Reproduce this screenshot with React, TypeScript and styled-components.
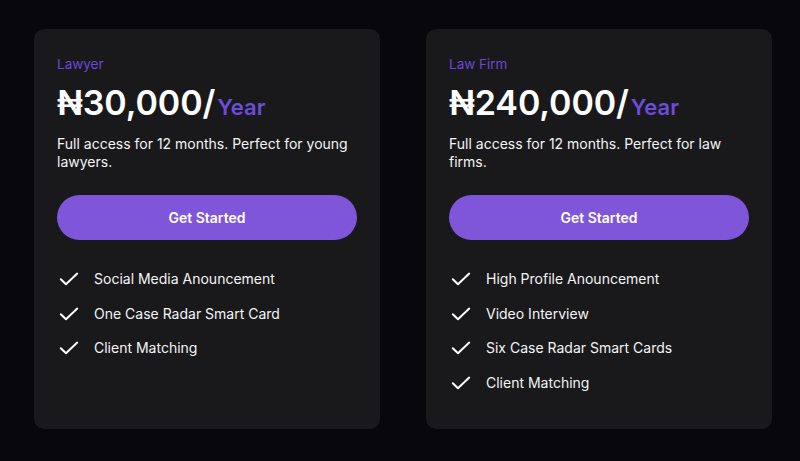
import React from "react";
import styled, { createGlobalStyle } from "styled-components";

const GlobalStyle = createGlobalStyle`
  html, body {
    margin: 0;
    padding: 0;
    background: #07070c;
  }
  body {
    font-family: Inter, "Noto Sans", sans-serif;
    -webkit-font-smoothing: antialiased;
  }
`;

const Page = styled.div`
  width: 800px;
  height: 461px;
  box-sizing: border-box;
  padding: 29px 0 0 34px;
  display: flex;
  gap: 46px;
  align-items: flex-start;
  background: #07070c;
`;

const Card = styled.div`
  width: 346px;
  height: 400px;
  box-sizing: border-box;
  background: #19191c;
  border-radius: 10px;
  padding: 26px 23px 0 23px;
  display: flex;
  flex-direction: column;
`;

const Label = styled.div`
  font-size: 13.5px;
  line-height: 18px;
  color: #6a47d6;
  font-weight: 400;
`;

const Price = styled.div`
  margin-top: 10px;
  font-size: 34px;
  line-height: 40px;
  font-weight: 600;
  color: #ffffff;
  letter-spacing: -0.1px;
  white-space: nowrap;
`;

const Period = styled.span`
  margin-left: 2px;
  font-size: 22px;
  font-weight: 600;
  color: #6d4cd9;
  letter-spacing: 0;
`;

const Description = styled.p`
  margin: 8px 0 0 0;
  font-size: 14px;
  line-height: 18px;
  color: #f4f4f5;
  max-width: 300px;
`;

const Button = styled.button`
  margin-top: 24px;
  height: 45px;
  width: 300px;
  border: none;
  border-radius: 23px;
  background: #7f56d9;
  color: #ffffff;
  font-family: inherit;
  font-size: 14px;
  font-weight: 600;
  cursor: pointer;
`;

const Features = styled.ul`
  list-style: none;
  margin: 30px 0 0 0;
  padding: 0 0 0 2px;
  display: flex;
  flex-direction: column;
  gap: 16.7px;
`;

const Feature = styled.li`
  display: flex;
  align-items: center;
  gap: 15px;
  font-size: 14px;
  line-height: 18px;
  color: #f4f4f5;
`;

const CheckIcon = () => (
  <svg width="20" height="14" viewBox="0 0 20 14" fill="none">
    <polyline
      points="1.8,7.2 7,12.2 18.2,1.6"
      stroke="#ffffff"
      strokeWidth="2"
      strokeLinecap="round"
      strokeLinejoin="round"
    />
  </svg>
);

type Plan = {
  label: string;
  price: string;
  description: string;
  features: string[];
};

const plans: Plan[] = [
  {
    label: "Lawyer",
    price: "₦30,000/",
    description: "Full access for 12 months. Perfect for young lawyers.",
    features: [
      "Social Media Anouncement",
      "One Case Radar Smart Card",
      "Client Matching",
    ],
  },
  {
    label: "Law Firm",
    price: "₦240,000/",
    description: "Full access for 12 months. Perfect for law firms.",
    features: [
      "High Profile Anouncement",
      "Video Interview",
      "Six Case Radar Smart Cards",
      "Client Matching",
    ],
  },
];

export default function App() {
  return (
    <>
      <GlobalStyle />
      <Page>
        {plans.map((plan) => (
          <Card key={plan.label}>
            <Label>{plan.label}</Label>
            <Price>
              {plan.price}
              <Period>Year</Period>
            </Price>
            <Description>{plan.description}</Description>
            <Button>Get Started</Button>
            <Features>
              {plan.features.map((f) => (
                <Feature key={f}>
                  <CheckIcon />
                  {f}
                </Feature>
              ))}
            </Features>
          </Card>
        ))}
      </Page>
    </>
  );
}
